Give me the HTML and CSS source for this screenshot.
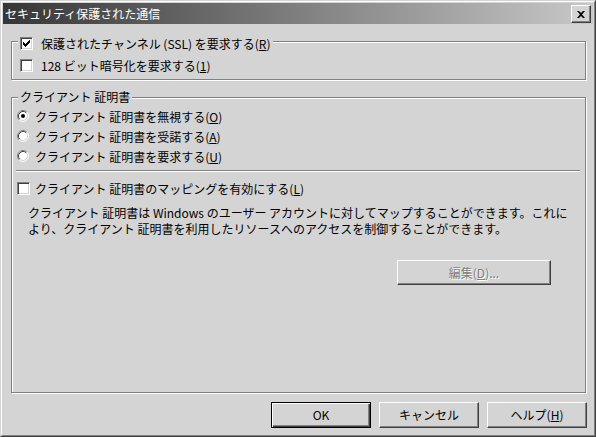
FILE: index.html
```html
<!DOCTYPE html>
<html lang="ja">
<head>
<meta charset="utf-8">
<title>セキュリティ保護された通信</title>
<link rel="stylesheet" href="styles.css">
</head>
<body>
<div class="window">
  <div class="frame">
    <div class="titlebar">
      <span class="title">セキュリティ保護された通信</span>
      <span class="close" aria-label="閉じる">
        <svg width="8" height="7" viewBox="0 0 8 7"><path d="M0 0h2l2 2 2-2h2l-3 3.5 3 3.5H6L4 5 2 7H0l3-3.5z" fill="#000"/></svg>
      </span>
    </div>
    <div class="client">
      <div class="group group-ssl">
        <div class="legend legend-check">
          <span class="check">
            <svg width="7" height="7" viewBox="0 0 7 7" shape-rendering="crispEdges"><path d="M0 2h1v3H0zM1 3h1v3H1zM2 4h1v3H2zM3 3h1v3H3zM4 2h1v3H4zM5 1h1v3H5zM6 0h1v3H6z" fill="#000"/></svg>
          </span>
          <span class="label label-wide">保護されたチャンネル (SSL) を要求する(<u>R</u>)</span>
        </div>
        <div class="row row-128">
          <span class="check"></span>
          <span class="label label-wide">128 ビット暗号化を要求する(<u>1</u>)</span>
        </div>
      </div>

      <div class="group group-cert">
        <div class="legend legend-text">クライアント 証明書</div>
        <div class="radios">
          <div class="radio-row">
            <svg class="radio" width="12" height="12" viewBox="0 0 12 12">
              <circle cx="6" cy="6" r="5" fill="#fff"/>
              <path d="M2.11 9.89A5.5 5.5 0 0 1 9.89 2.11" fill="none" stroke="#808080"/>
              <path d="M9.89 2.11A5.5 5.5 0 0 1 2.11 9.89" fill="none" stroke="#fff"/>
              <path d="M2.82 9.18A4.5 4.5 0 0 1 9.18 2.82" fill="none" stroke="#404040"/>
              <path d="M9.18 2.82A4.5 4.5 0 0 1 2.82 9.18" fill="none" stroke="#d4d4d4"/>
              <circle cx="6" cy="6" r="2" fill="#000"/>
            </svg>
            <span class="label">クライアント 証明書を無視する(<u>O</u>)</span>
          </div>
          <div class="radio-row">
            <svg class="radio" width="12" height="12" viewBox="0 0 12 12">
              <circle cx="6" cy="6" r="5" fill="#fff"/>
              <path d="M2.11 9.89A5.5 5.5 0 0 1 9.89 2.11" fill="none" stroke="#808080"/>
              <path d="M9.89 2.11A5.5 5.5 0 0 1 2.11 9.89" fill="none" stroke="#fff"/>
              <path d="M2.82 9.18A4.5 4.5 0 0 1 9.18 2.82" fill="none" stroke="#404040"/>
              <path d="M9.18 2.82A4.5 4.5 0 0 1 2.82 9.18" fill="none" stroke="#d4d4d4"/>
            </svg>
            <span class="label">クライアント 証明書を受諾する(<u>A</u>)</span>
          </div>
          <div class="radio-row">
            <svg class="radio" width="12" height="12" viewBox="0 0 12 12">
              <circle cx="6" cy="6" r="5" fill="#fff"/>
              <path d="M2.11 9.89A5.5 5.5 0 0 1 9.89 2.11" fill="none" stroke="#808080"/>
              <path d="M9.89 2.11A5.5 5.5 0 0 1 2.11 9.89" fill="none" stroke="#fff"/>
              <path d="M2.82 9.18A4.5 4.5 0 0 1 9.18 2.82" fill="none" stroke="#404040"/>
              <path d="M9.18 2.82A4.5 4.5 0 0 1 2.82 9.18" fill="none" stroke="#d4d4d4"/>
            </svg>
            <span class="label">クライアント 証明書を要求する(<u>U</u>)</span>
          </div>
        </div>
        <div class="sep"></div>
        <div class="row row-map">
          <span class="check"></span>
          <span class="label label-narrow">クライアント 証明書のマッピングを有効にする(<u>L</u>)</span>
        </div>
        <p class="desc">クライアント 証明書は Windows のユーザー アカウントに対してマップすることができます。これに<br>より、クライアント 証明書を利用したリソースへのアクセスを制御することができます。</p>
        <button class="btn btn-edit" disabled>編集(<u>D</u>)...</button>
      </div>

      <div class="buttons">
        <button class="btn btn-default">OK</button>
        <button class="btn">キャンセル</button>
        <button class="btn">ヘルプ(<u>H</u>)</button>
      </div>
    </div>
  </div>
</div>
</body>
</html>
```

FILE: styles.css
```css
* {
  box-sizing: border-box;
}

html,
body {
  margin: 0;
  padding: 0;
}

body {
  width: 596px;
  height: 437px;
  overflow: hidden;
  background: #d4d4d4;
  color: #000;
  font-family: "Noto Sans CJK JP", "Noto Sans", sans-serif;
  font-size: 12px;
}

u {
  text-decoration: underline;
  text-underline-offset: 1px;
}

.window {
  width: 596px;
  height: 437px;
  border: 1px solid;
  border-color: #d4d4d4 #404040 #404040 #d4d4d4;
  background: #d4d4d4;
}

.frame {
  height: 100%;
  border: 1px solid;
  border-color: #fff #808080 #808080 #fff;
  padding: 1px;
  display: flex;
  flex-direction: column;
}

/* title bar */
.titlebar {
  height: 21px;
  flex: none;
  display: flex;
  align-items: flex-start;
  padding: 0 2px 0 2px;
  background: linear-gradient(to right, #363636, #c8c8c8);
  color: #fff;
}

.title {
  flex: 1;
  line-height: 21px;
  white-space: nowrap;
}

.close {
  width: 20px;
  height: 18px;
  margin-top: 2px;
  display: flex;
  align-items: center;
  justify-content: center;
  background: #d4d4d4;
  border: 1px solid;
  border-color: #fff #404040 #404040 #fff;
  box-shadow: inset -1px -1px 0 #808080;
}

/* client area */
.client {
  flex: 1;
  display: flex;
  flex-direction: column;
  padding: 0 7px 0 8px;
}

.group {
  display: flex;
  flex-direction: column;
  align-items: flex-start;
  border: 1px solid #808080;
  box-shadow: inset 1px 1px 0 #fff, 1px 1px 0 #fff;
}

.group-ssl {
  margin-top: 17px;
  height: 39px;
}

.group-cert {
  margin-top: 17px;
  height: 296px;
}

.legend {
  background: #d4d4d4;
  white-space: nowrap;
}

.legend-check {
  display: flex;
  align-items: center;
  height: 13px;
  margin-top: -5px;
  margin-left: 6px;
  padding: 0 2px;
}

.legend-text {
  height: 14px;
  line-height: 14px;
  margin-top: -8px;
  margin-left: 6px;
  padding: 0 2px;
}

.row {
  display: flex;
  align-items: center;
  height: 13px;
  white-space: nowrap;
}

.row-128 {
  margin-top: 9px;
  margin-left: 8px;
}

.row-map {
  margin-top: 10px;
  margin-left: 5px;
}

.label {
  line-height: 13px;
}

.label-wide {
  margin-left: 8px;
}

.label-narrow {
  margin-left: 5px;
}

/* checkbox */
.check {
  width: 13px;
  height: 13px;
  flex: none;
  display: flex;
  align-items: center;
  justify-content: center;
  background: #fff;
  border: 1px solid;
  border-color: #808080 #fff #fff #808080;
  box-shadow: inset 1px 1px 0 #404040, inset -1px -1px 0 #d4d4d4;
}

.check svg {
  display: block;
}

/* radios */
.radios {
  margin-top: 2px;
  display: flex;
  flex-direction: column;
}

.radio-row {
  display: flex;
  align-items: center;
  height: 20px;
  margin-left: 5px;
  white-space: nowrap;
}

.radio {
  flex: none;
  display: block;
}

.radio-row .label {
  margin-left: 6px;
}

/* separator */
.sep {
  align-self: stretch;
  height: 2px;
  margin: 4px 5px 0 4px;
  border-top: 1px solid #808080;
  border-bottom: 1px solid #fff;
}

.desc {
  margin: 10px 0 0 16px;
  line-height: 16px;
  white-space: nowrap;
}

/* buttons */
.btn {
  font-family: inherit;
  font-size: 12px;
  color: #000;
  background: #d4d4d4;
  padding: 0;
  margin: 0;
  border: 1px solid;
  border-color: #fff #404040 #404040 #fff;
  box-shadow: inset -1px -1px 0 #808080;
  line-height: 1;
}

.btn-edit {
  align-self: flex-end;
  width: 154px;
  height: 25px;
  margin: 23px 34px 0 0;
  color: #808080;
  text-shadow: 1px 1px 0 #fff;
}

.buttons {
  display: flex;
  justify-content: flex-end;
  gap: 8px;
  margin: 9px -1px 0 0;
}

.buttons .btn {
  width: 100px;
  height: 26px;
}

.btn-default {
  border-color: #000;
  box-shadow: inset 1px 1px 0 #fff, inset -1px -1px 0 #404040, inset -2px -2px 0 #808080;
}
```
